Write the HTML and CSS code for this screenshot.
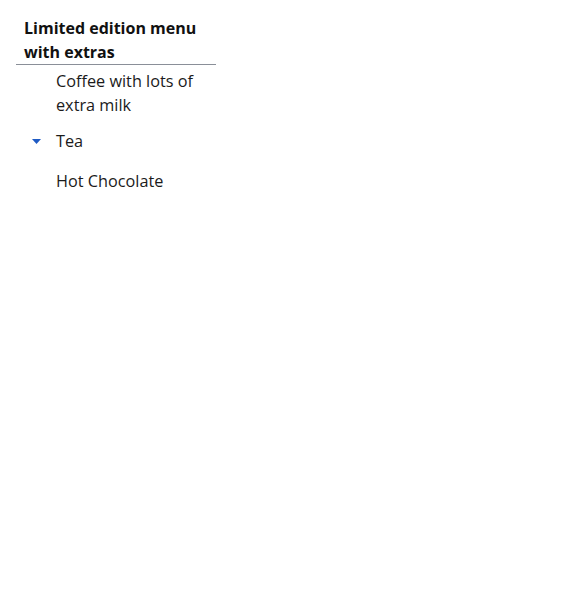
FILE: index.html
```html
<!DOCTYPE html>
<html>
<head>
<meta charset="utf-8">
<link rel="stylesheet" href="styles.css">
</head>
<body>
<div class="menu">
  <div class="menu-header">Limited edition menu with extras</div>
  <ul class="menu-list">
    <li class="menu-item"><span class="caret-slot"></span><span class="label">Coffee with lots of extra milk</span></li>
    <li class="menu-item"><span class="caret-slot"><svg class="caret" width="9" height="5" viewBox="0 0 9 5"><path d="M0 0H9L4.5 5Z" fill="#1f5bc4"/></svg></span><span class="label">Tea</span></li>
    <li class="menu-item"><span class="caret-slot"></span><span class="label">Hot Chocolate</span></li>
  </ul>
</div>
</body>
</html>
```

FILE: styles.css
```css
html, body { margin: 0; padding: 0; background: #fff; }
body { font-family: "Open Sans", sans-serif; color: #1b1b1b; }
.menu { width: 200px; margin: 16px 0 0 16px; }
.menu-header {
  font-weight: 700;
  font-size: 16px;
  line-height: 24px;
  padding: 0 8px;
  border-bottom: 1px solid #8a8f98;
  color: #111;
}
.menu-list { list-style: none; margin: 0; padding: 0; }
.menu-item {
  display: flex;
  align-items: center;
  min-height: 32px;
  padding: 4px 0;
  font-size: 16.25px;
  line-height: 24px;
}
.caret-slot { width: 40px; flex: none; display: flex; justify-content: center; align-items: center; }
.caret { display: block; }
.label { flex: 1; }
```
